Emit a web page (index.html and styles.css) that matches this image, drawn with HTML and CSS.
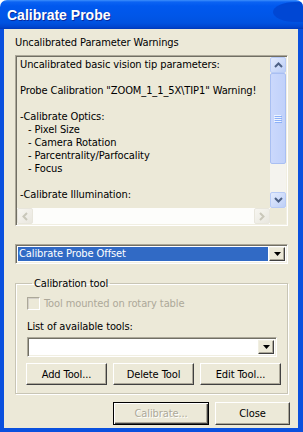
FILE: index.html
```html
<!DOCTYPE html>
<html lang="en">
<head>
  <meta charset="UTF-8" />
  <title>Calibrate Probe</title>
  <link rel="stylesheet" href="styles.css">
</head>
<body>

  <div class="window">
    <!-- Barre de titre -->
    <div class="titlebar">
      <span class="title">Calibrate Probe</span>
    </div>

    <div class="client">
      <div class="caption">Uncalibrated Parameter Warnings</div>

      <!-- Zone de texte en lecture seule -->
      <div class="memo">
        <div class="memo-text">
          <div>Uncalibrated basic vision tip parameters:</div>
          <div>&nbsp;</div>
          <div>Probe Calibration "ZOOM_1_1_5X\TIP1" Warning!</div>
          <div>&nbsp;</div>
          <div>-Calibrate Optics:</div>
          <div class="sub">- Pixel Size</div>
          <div class="sub">- Camera Rotation</div>
          <div class="sub">- Parcentrality/Parfocality</div>
          <div class="sub">- Focus</div>
          <div>&nbsp;</div>
          <div>-Calibrate Illumination:</div>
        </div>

        <div class="vscroll">
          <div class="arrow">
            <svg width="9" height="6" viewBox="0 0 9 6"><polyline points="1,5 4.5,1.5 8,5" fill="none" stroke="#4d6185" stroke-width="2"/></svg>
          </div>
          <div class="thumb">
            <svg width="8" height="8" viewBox="0 0 8 8">
              <path d="M0 0.5h7M0 2.5h7M0 4.5h7M0 6.5h7" stroke="#eef4fe" stroke-width="1"/>
              <path d="M1 1.5h7M1 3.5h7M1 5.5h7M1 7.5h7" stroke="#8cb0f8" stroke-width="1"/>
            </svg>
          </div>
          <div class="track"></div>
          <div class="arrow">
            <svg width="9" height="6" viewBox="0 0 9 6"><polyline points="1,1 4.5,4.5 8,1" fill="none" stroke="#4d6185" stroke-width="2"/></svg>
          </div>
        </div>

        <div class="hscroll">
          <div class="arrow off">
            <svg width="6" height="9" viewBox="0 0 6 9"><polyline points="5,1 1.5,4.5 5,8" fill="none" stroke="#c9c7ba" stroke-width="2"/></svg>
          </div>
          <div class="track"></div>
          <div class="arrow off">
            <svg width="6" height="9" viewBox="0 0 6 9"><polyline points="1,1 4.5,4.5 1,8" fill="none" stroke="#c9c7ba" stroke-width="2"/></svg>
          </div>
        </div>

        <div class="corner"></div>
      </div>

      <!-- Liste déroulante principale -->
      <div class="combo main">
        <div class="field selected">Calibrate Probe Offset</div>
        <div class="drop">
          <svg width="7" height="4" viewBox="0 0 7 4"><polygon points="0,0 7,0 3.5,4" fill="#000"/></svg>
        </div>
      </div>

      <fieldset class="group">
        <legend>Calibration tool</legend>

        <div class="check-row">
          <span class="checkbox"></span>
          <span>Tool mounted on rotary table</span>
        </div>

        <div class="list-label">List of available tools:</div>

        <div class="combo tools">
          <div class="field"></div>
          <div class="drop">
            <svg width="7" height="4" viewBox="0 0 7 4"><polygon points="0,0 7,0 3.5,4" fill="#000"/></svg>
          </div>
        </div>

        <div class="tool-buttons">
          <button class="btn">Add Tool...</button>
          <button class="btn">Delete Tool</button>
          <button class="btn">Edit Tool...</button>
        </div>
      </fieldset>

      <div class="footer">
        <button class="btn default" disabled>Calibrate...</button>
        <button class="btn close">Close</button>
      </div>
    </div>
  </div>

</body>
</html>
```

FILE: styles.css
```css
* {
  box-sizing: border-box;
  margin: 0;
  padding: 0;
}

html, body {
  height: 100%;
  background-color: #fff;
  overflow: hidden;
}

body {
  font-family: "DejaVu Sans Condensed", "Liberation Sans", sans-serif;
  font-size: 11px;
  letter-spacing: -0.1px;
  color: #000;
}

.window {
  width: 303px;
  height: 432px;
  display: flex;
  flex-direction: column;
}

/* Barre de titre façon XP */
.titlebar {
  position: relative;
  flex: none;
  height: 29px;
  padding-left: 7px;
  display: flex;
  align-items: center;
  border-radius: 7px 7px 0 0;
  overflow: hidden;
  background: linear-gradient(#3d8ffb 0, #0b63f3 2px, #0058ee 6px, #0056e8 16px, #0052e0 23px, #0045cf 27px, #0038b8 29px);
}

.titlebar::after {
  content: "";
  position: absolute;
  right: -14px;
  top: 2px;
  width: 44px;
  height: 20px;
  border-radius: 50% 0 0 50%;
  background: #0047d4;
}

.title {
  position: relative;
  z-index: 1;
  font-family: "Liberation Sans", Arial, sans-serif;
  font-weight: bold;
  font-size: 14px;
  letter-spacing: 0;
  color: #fff;
  text-shadow: 1px 1px #0a2a9c;
}

.client {
  flex: 1;
  display: flex;
  flex-direction: column;
  padding: 7px 10px 0 11px;
  background-color: #ece9d8;
  border-style: solid;
  border-color: #0a50de;
  border-width: 0 5px 4px 4px;
}

.caption {
  line-height: 13px;
}

/* Mémo */
.memo {
  margin-top: 6px;
  height: 171px;
  display: grid;
  grid-template-columns: 1fr 16px;
  grid-template-rows: 1fr 16px;
  padding: 1px;
  border: 1px solid;
  border-color: #aca899 #fff #fff #aca899;
  box-shadow: inset 1px 1px #716f64, inset -1px -1px #f1efe2;
}

.memo-text {
  padding: 1px 0 0 3px;
  line-height: 13px;
  white-space: nowrap;
  overflow: hidden;
  background-color: #ece9d8;
}

.memo-text .sub {
  padding-left: 8px;
}

.vscroll {
  display: flex;
  flex-direction: column;
  background-color: #f4f3ee;
}

.hscroll {
  display: flex;
  background-color: #fdfdfb;
}

.vscroll .track,
.hscroll .track {
  flex: 1;
}

.arrow {
  flex: none;
  width: 16px;
  height: 16px;
  display: flex;
  align-items: center;
  justify-content: center;
  border: 1px solid #b8cbf6;
  border-radius: 2px;
  background: linear-gradient(135deg, #e3ebfd, #bdcff7);
}

.arrow.off {
  border-color: #e8e6dc;
  background: linear-gradient(135deg, #f7f6f1, #e9e7df);
}

.thumb {
  flex: none;
  height: 91px;
  display: flex;
  align-items: center;
  justify-content: center;
  border: 1px solid #a9bff2;
  border-radius: 2px;
  background: linear-gradient(90deg, #cbd8fc, #c0d1fa);
}

.corner {
  background-color: #ece9d8;
}

/* Listes déroulantes */
.combo {
  height: 20px;
  display: flex;
  padding: 2px;
  border: 1px solid;
  border-color: #aca899 #fff #fff #aca899;
  box-shadow: inset 1px 1px #716f64, inset -1px -1px #f1efe2;
  background-color: #fff;
}

.combo.main {
  margin-top: 18px;
}

.field {
  flex: 1;
  line-height: 14px;
  padding-left: 1px;
  margin-right: 1px;
}

.field.selected {
  background-color: #316ac5;
  color: #fff;
}

.drop {
  flex: none;
  width: 16px;
  display: flex;
  align-items: center;
  justify-content: center;
  background-color: #ece9d8;
  border: 1px solid;
  border-color: #f1efe2 #404040 #404040 #f1efe2;
  box-shadow: inset -1px -1px #aca899;
}

/* Cadre de groupe */
.group {
  min-width: 0;
  margin-top: 13px;
  padding: 0 0 8px 11px;
  border: 1px solid #c8c5b5;
  box-shadow: inset 1px 1px #fff, 1px 1px #fff;
}

.group legend {
  margin-left: 5px;
  padding: 0 2px;
  line-height: 13px;
}

.check-row {
  margin-top: 7px;
  height: 13px;
  display: flex;
  align-items: center;
  gap: 4px;
  color: #aca899;
}

.checkbox {
  width: 13px;
  height: 13px;
  border: 1px solid;
  border-color: #aca899 #fff #fff #aca899;
  box-shadow: inset 1px 1px #d4d0c8;
  background-color: #ece9d8;
}

.list-label {
  margin-top: 10px;
  line-height: 13px;
}

.combo.tools {
  margin-top: 4px;
  width: 250px;
}

.tool-buttons {
  margin-top: 6px;
  margin-left: -1px;
  display: flex;
  gap: 6px;
}

/* Boutons classiques */
.btn {
  width: 81px;
  height: 22px;
  font-family: "DejaVu Sans Condensed", "Liberation Sans", sans-serif;
  font-size: 11px;
  letter-spacing: -0.1px;
  color: #000;
  background-color: #ece9d8;
  border: 1px solid;
  border-color: #fff #404040 #404040 #fff;
  box-shadow: inset -1px -1px #aca899;
}

.footer {
  margin-top: 8px;
  margin-right: -2px;
  display: flex;
  justify-content: flex-end;
  gap: 6px;
}

.footer .btn {
  height: 23px;
}

.btn.default {
  width: 96px;
  border-color: #000;
  box-shadow: inset 1px 1px #fff, inset -1px -1px #404040, inset -2px -2px #aca899;
  color: #aca899;
  text-shadow: 1px 1px #fff;
}

.btn.close {
  width: 75px;
}
```
